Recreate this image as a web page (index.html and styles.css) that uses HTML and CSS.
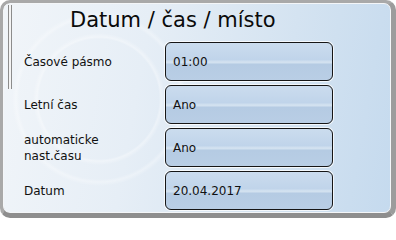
FILE: index.html
```html
<!DOCTYPE html>
<html lang="cs">
<head>
<meta charset="utf-8">
<title>Datum / čas / místo</title>
<link rel="stylesheet" href="styles.css">
</head>
<body>
<div class="frame">
  <div class="panel">
    <div class="scrollbar"></div>
    <h1 class="title">Datum / čas / místo</h1>
    <div class="rows">
      <div class="row">
        <div class="label">Časové pásmo</div>
        <div class="field">01:00</div>
      </div>
      <div class="row">
        <div class="label">Letní čas</div>
        <div class="field">Ano</div>
      </div>
      <div class="row">
        <div class="label two">automaticke<br>nast.času</div>
        <div class="field">Ano</div>
      </div>
      <div class="row">
        <div class="label">Datum</div>
        <div class="field">20.04.2017</div>
      </div>
    </div>
  </div>
</div>
</body>
</html>
```

FILE: styles.css
```css
html, body {
  margin: 0;
  padding: 0;
  background: #ffffff;
}
body {
  width: 396px;
  height: 218px;
  overflow: hidden;
  font-family: "DejaVu Sans", Verdana, sans-serif;
  color: #111;
}
.frame {
  box-sizing: border-box;
  width: 396px;
  height: 218px;
  border-style: solid;
  border-color: #a9a9a9 #9c9c9c #8e8e8e #a9a9a9;
  border-width: 3px 5px 5px 3px;
  border-radius: 10px;
  background: #a9a9a9;
  overflow: hidden;
}
.panel {
  position: relative;
  box-sizing: border-box;
  height: 100%;
  border: 1px solid #f4f6f8;
  border-radius: 7px;
  background:
    radial-gradient(circle at 95px 95px, rgba(255,255,255,0) 0 60px, rgba(255,255,255,0.35) 62px, rgba(255,255,255,0) 66px, rgba(255,255,255,0) 80px, rgba(255,255,255,0.3) 83px, rgba(255,255,255,0) 87px),
    linear-gradient(100deg, #f1f5f9 0%, #e6eef6 35%, #d4e3f1 70%, #c5daee 100%);
  padding: 4px 0 0 0;
}
.scrollbar {
  position: absolute;
  left: 4px;
  top: 1px;
  width: 2px;
  height: 84px;
  border-left: 1px solid #8c8c8c;
  border-right: 1px solid #8c8c8c;
  background: #f4f4f4;
}
.title {
  margin: 0;
  padding-left: 66px;
  font-size: 21px;
  line-height: 24px;
  font-weight: normal;
  color: #0a0a0a;
  height: 34px;
}
.rows {
  display: flex;
  flex-direction: column;
  gap: 4px;
}
.row {
  display: flex;
  align-items: center;
  height: 39px;
}
.label {
  width: 141px;
  padding-left: 20px;
  font-size: 12px;
  line-height: 16px;
}
.field {
  box-sizing: border-box;
  width: 168px;
  height: 39px;
  display: flex;
  align-items: center;
  padding-left: 7px;
  font-size: 12px;
  border: 1.5px solid #161616;
  border-radius: 6px;
  box-shadow: 0 0 0 1px rgba(255,255,255,0.75);
  background: linear-gradient(to bottom, #cbdcee 0%, #c0d4ea 45%, #d6e4f1 52%, #b5cbe3 58%, #b9cee5 100%);
}
```
